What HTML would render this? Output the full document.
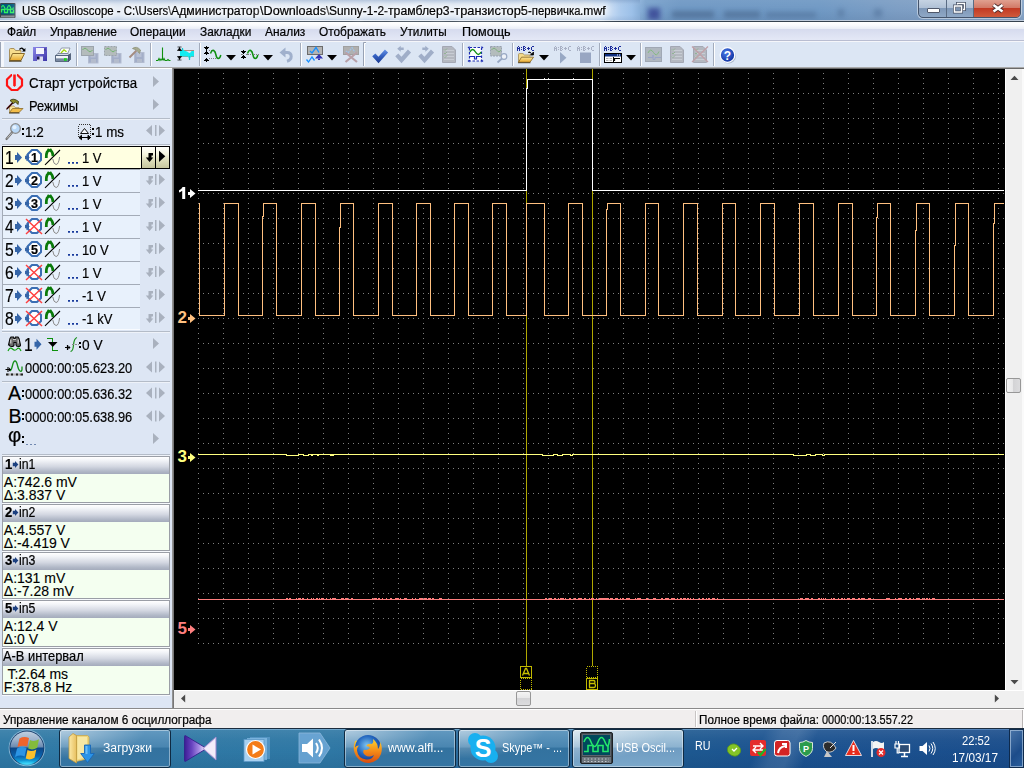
<!DOCTYPE html>
<html><head><meta charset="utf-8"><title>USB Oscilloscope</title>
<style>
html,body{margin:0;padding:0;width:1024px;height:768px;overflow:hidden;background:#dde6f4;font-family:"Liberation Sans",sans-serif;}
.a{position:absolute}
.t{position:absolute;white-space:pre;transform-origin:0 0;margin:0;padding:0}
svg{position:absolute;overflow:visible}
</style></head><body>

<div class="a" style="left:0;top:0;width:1024px;height:20px;background:linear-gradient(to right,#bccde2 0,#cfdbeb 20px,#d6e1ef 120px,#d6e2f0 585px,#b4d0f0 615px,#9cc0e8 632px,#7aa2cc 646px,#6f98c4 680px,#7099c4 820px,#7d9ec4 900px,#88a6c8 1024px)"></div>
<div class="a" style="left:0;top:0;width:640px;height:20px;background:linear-gradient(rgba(120,150,190,.45) 0,rgba(160,185,215,.15) 20%,rgba(255,255,255,0) 35%,rgba(255,255,255,0) 75%,rgba(130,160,200,.30) 100%)"></div>
<div class="a" style="left:640px;top:0;width:384px;height:20px;background:linear-gradient(rgba(255,255,255,.06) 0,rgba(255,255,255,0) 50%,rgba(20,40,80,.08) 100%)"></div>
<div class="a" style="left:648px;top:8px;width:12px;height:12px;background:#3c4c98;filter:blur(2.5px);opacity:.9"></div>
<div class="a" style="left:672px;top:11px;width:42px;height:7px;background:#4e6e94;filter:blur(2.5px);opacity:.75"></div>
<div class="a" style="left:724px;top:11px;width:36px;height:7px;background:#4e6e94;filter:blur(2.5px);opacity:.7"></div>
<div class="a" style="left:766px;top:12px;width:50px;height:6px;background:#52729a;filter:blur(2.5px);opacity:.6"></div>
<div class="a" style="left:838px;top:9px;width:6px;height:8px;background:#52729a;filter:blur(2.5px);opacity:.6"></div>
<div class="a" style="left:874px;top:9px;width:8px;height:8px;background:#52729a;filter:blur(2.5px);opacity:.6"></div>
<div class="a" style="left:0;top:20px;width:1024px;height:1px;background:linear-gradient(to right,#e6edf5 0,#e6edf5 600px,#c0ccdc 660px,#c0ccdc 100%)"></div>
<div class="a" style="left:0;top:21px;width:1024px;height:1px;background:#36424f"></div>
<svg class="a" style="left:0;top:3px" width="18" height="16"><rect x="0" y="0" width="15.500" height="15" rx="1" fill="#3a4248"/><rect x="1" y="1" width="13.500" height="10.500" fill="#00587c"/><path d="M1.500 9.500V6.500H4.500V9.500H7.500V6.500H10.500V9.500H13.500V6.500" stroke="#30f060" fill="none" stroke-width="1.300"/><path d="M1.500 4.500q1.500-4 3 0t3 0t3 0t3 0" stroke="#30f060" fill="none" stroke-width="1.200"/><rect x="1" y="12.500" width="13.500" height="2" fill="#8a9096"/></svg>
<div class="a" style="left:14px;top:2px;width:600px;height:16px;border-radius:8px;background:rgba(255,255,255,.35);filter:blur(5px)"></div>
<div class="t" style="left:21.50px;top:2.84px;font-size:12px;line-height:16px;color:#000;transform:scale(0.9540,1.0000);text-shadow:0 0 5px #fff,0 0 7px #fff,0 0 9px #fff,0 0 12px #fff;-webkit-text-stroke:0.2px;">USB Oscilloscope - C:\Users\</div>
<div class="t" style="left:171.00px;top:2.84px;font-size:12px;line-height:16px;color:#000;transform:scale(1.0222,1.0000);text-shadow:0 0 5px #fff,0 0 7px #fff,0 0 9px #fff,0 0 12px #fff;-webkit-text-stroke:0.2px;">Администратор</div>
<div class="t" style="left:259.50px;top:2.84px;font-size:12px;line-height:16px;color:#000;transform:scale(1.0523,1.0000);text-shadow:0 0 5px #fff,0 0 7px #fff,0 0 9px #fff,0 0 12px #fff;-webkit-text-stroke:0.2px;">\Downloads\</div>
<div class="t" style="left:329.00px;top:2.84px;font-size:12px;line-height:16px;color:#000;transform:scale(0.9937,1.0000);text-shadow:0 0 5px #fff,0 0 7px #fff,0 0 9px #fff,0 0 12px #fff;-webkit-text-stroke:0.2px;">Sunny-1-2-</div>
<div class="t" style="left:388.00px;top:2.84px;font-size:12px;line-height:16px;color:#000;transform:scale(1.0194,1.0000);text-shadow:0 0 5px #fff,0 0 7px #fff,0 0 9px #fff,0 0 12px #fff;-webkit-text-stroke:0.2px;">трамблер3</div>
<div class="t" style="left:449.50px;top:2.84px;font-size:12px;line-height:16px;color:#000;transform:scale(1.0676,1.0000);text-shadow:0 0 5px #fff,0 0 7px #fff,0 0 9px #fff,0 0 12px #fff;-webkit-text-stroke:0.2px;">-транзистор5</div>
<div class="t" style="left:527.50px;top:2.84px;font-size:12px;line-height:16px;color:#000;transform:scale(0.9483,1.0000);text-shadow:0 0 5px #fff,0 0 7px #fff,0 0 9px #fff,0 0 12px #fff;-webkit-text-stroke:0.2px;">-первичка</div>
<div class="t" style="left:580.00px;top:2.84px;font-size:12px;line-height:16px;color:#000;transform:scale(1.0062,1.0000);text-shadow:0 0 5px #fff,0 0 7px #fff,0 0 9px #fff,0 0 12px #fff;-webkit-text-stroke:0.2px;">.mwf</div>
<div class="a" style="left:918px;top:-1px;width:103px;height:19px;border:1px solid #44546c;border-radius:0 0 5px 5px;box-sizing:border-box;background:linear-gradient(#c6d3e3 0,#b0c1d6 45%,#7f98b8 50%,#8fa8c6 100%);box-shadow:0 0 0 1px rgba(255,255,255,.45)"></div>
<div class="a" style="left:973px;top:0;width:47px;height:17px;border-radius:0 0 4px 0;background:linear-gradient(#e0a090 0,#d27a68 45%,#c23a24 50%,#cf5a3c 100%)"></div>
<div class="a" style="left:946px;top:0;width:1px;height:17px;background:#5a6c84"></div>
<div class="a" style="left:973px;top:0;width:1px;height:17px;background:#5a6c84"></div>
<div class="a" style="left:927px;top:8px;width:11px;height:3px;background:#fff;border:1px solid #50586a;border-radius:1px;box-sizing:content-box"></div>
<svg class="a" style="left:953px;top:2px" width="14" height="13"><path d="M4.500 3.500V1.500H11.500V7.500H9.500" fill="none" stroke="#4a5468" stroke-width="3"/><path d="M4.500 3.500V1.500H11.500V7.500H9.500" fill="none" stroke="#fff" stroke-width="1.300"/><rect x="1.500" y="4" width="7" height="6" fill="none" stroke="#4a5468" stroke-width="3"/><rect x="1.500" y="4" width="7" height="6" fill="none" stroke="#fff" stroke-width="1.500"/><rect x="3.500" y="6" width="3" height="2" fill="#7c92b0"/></svg>
<svg class="a" style="left:992px;top:3px" width="12" height="11"><path d="M1.500 2L10.500 8.500M10.500 2L1.500 8.500" stroke="#4c2c2c" stroke-width="4.400" stroke-linecap="butt"/><path d="M1.500 2L10.500 8.500M10.500 2L1.500 8.500" stroke="#fff" stroke-width="2.600" stroke-linecap="butt"/></svg>
<div class="a" style="left:0;top:22px;width:1024px;height:18px;background:linear-gradient(#ffffff 0,#fafbfd 3px,#e9edf6 7px,#d6dbee 7px,#e4e8f6 18px)"></div>
<div class="a" style="left:0;top:40px;width:1024px;height:1px;background:#b9bdd1"></div>
<div class="t" style="left:6.80px;top:23.84px;font-size:12px;line-height:16px;color:#000;transform:scale(0.9893,1.0000);-webkit-text-stroke:0.2px;">Файл</div>
<div class="t" style="left:49.50px;top:23.84px;font-size:12px;line-height:16px;color:#000;transform:scale(1.0042,1.0000);-webkit-text-stroke:0.2px;">Управление</div>
<div class="t" style="left:130.30px;top:23.84px;font-size:12px;line-height:16px;color:#000;transform:scale(0.9904,1.0000);-webkit-text-stroke:0.2px;">Операции</div>
<div class="t" style="left:200.10px;top:23.84px;font-size:12px;line-height:16px;color:#000;transform:scale(0.9877,1.0000);-webkit-text-stroke:0.2px;">Закладки</div>
<div class="t" style="left:264.70px;top:23.84px;font-size:12px;line-height:16px;color:#000;transform:scale(0.9947,1.0000);-webkit-text-stroke:0.2px;">Анализ</div>
<div class="t" style="left:319.30px;top:23.84px;font-size:12px;line-height:16px;color:#000;transform:scale(0.9885,1.0000);-webkit-text-stroke:0.2px;">Отображать</div>
<div class="t" style="left:399.80px;top:23.84px;font-size:12px;line-height:16px;color:#000;transform:scale(0.9799,1.0000);-webkit-text-stroke:0.2px;">Утилиты</div>
<div class="t" style="left:461.50px;top:23.84px;font-size:12px;line-height:16px;color:#000;transform:scale(1.0505,1.0000);-webkit-text-stroke:0.2px;">Помощь</div>
<div class="a" style="left:0;top:41px;width:1024px;height:27px;background:#dce6f4"></div>
<div class="a" style="left:0;top:41px;width:1024px;height:1px;background:#f5f6fa"></div>
<div class="a" style="left:0;top:67px;width:1024px;height:1px;background:#a9a9a9"></div>
<div class="a" style="left:0;top:42px;width:1px;height:25px;background:#9aa4b6"></div><div class="a" style="left:1px;top:42px;width:3px;height:25px;background:#f4f7fc"></div>
<svg class="a" style="left:0;top:0" width="1024" height="70"><defs><linearGradient id="gf" x1="0" y1="0" x2="0" y2="1"><stop offset="0" stop-color="#fbe79a"/><stop offset="1" stop-color="#e9a82c"/></linearGradient><linearGradient id="gfl" x1="0" y1="0" x2="1" y2="1"><stop offset="0" stop-color="#8c88e8"/><stop offset="1" stop-color="#3c34a8"/></linearGradient><linearGradient id="gck" x1="0" y1="0" x2="0" y2="1"><stop offset="0" stop-color="#5a8ae0"/><stop offset="1" stop-color="#1c44a0"/></linearGradient><radialGradient id="ghp" cx=".4" cy=".35" r=".7"><stop offset="0" stop-color="#4a7ae8"/><stop offset="1" stop-color="#0c2c9c"/></radialGradient></defs><path d="M76.5 43V66" stroke="#a3acbc" stroke-width="1"/><path d="M77.5 43V66" stroke="#fff" stroke-width="1"/><path d="M150.5 43V66" stroke="#a3acbc" stroke-width="1"/><path d="M151.5 43V66" stroke="#fff" stroke-width="1"/><path d="M199.5 43V66" stroke="#a3acbc" stroke-width="1"/><path d="M200.5 43V66" stroke="#fff" stroke-width="1"/><path d="M300.5 43V66" stroke="#a3acbc" stroke-width="1"/><path d="M301.5 43V66" stroke="#fff" stroke-width="1"/><path d="M462.5 43V66" stroke="#a3acbc" stroke-width="1"/><path d="M463.5 43V66" stroke="#fff" stroke-width="1"/><path d="M512.5 43V66" stroke="#a3acbc" stroke-width="1"/><path d="M513.5 43V66" stroke="#fff" stroke-width="1"/><path d="M599.5 43V66" stroke="#a3acbc" stroke-width="1"/><path d="M600.5 43V66" stroke="#fff" stroke-width="1"/><path d="M640.5 43V66" stroke="#a3acbc" stroke-width="1"/><path d="M641.5 43V66" stroke="#fff" stroke-width="1"/><path d="M713.5 43V66" stroke="#a3acbc" stroke-width="1"/><path d="M714.5 43V66" stroke="#fff" stroke-width="1"/><path d="M366 42.5H363.5V66" stroke="#98a2b4" fill="none"/><path d="M366 43.5H364.5V66" stroke="#fff" fill="none"/><path d="M226 55h10l-5 5.5z" fill="#000"/><path d="M263 55h10l-5 5.5z" fill="#000"/><path d="M327 55h10l-5 5.5z" fill="#000"/><path d="M539 55h10l-5 5.5z" fill="#000"/><path d="M626 55h10l-5 5.5z" fill="#000"/><g transform="translate(9,47)"><path d="M0.5 13.5V2.5q0-1 1-1h3.5l1.5 2h5.5v2" fill="#f6dc8c" stroke="#a8905c"/><path d="M0.5 13.5L3.5 6.5H15.5L12 13.5Z" fill="url(#gf)" stroke="#8a6a28"/><path d="M0 14.2H12.5" stroke="#4a3a1a" stroke-width="1"/></g><path d="M19.5 49.5q2.5-3 4.5 1" fill="none" stroke="#000" stroke-width="1.3"/><path d="M22 51.5h3.4v-3.4z" fill="#000"/><g transform="translate(33,47)"><rect x="0" y="0" width="14" height="14" fill="url(#gfl)"/><rect x="3" y="1" width="8" height="6" fill="#f4f4fc"/><rect x="11.5" y="1.5" width="1" height="2" fill="#2a2470"/><rect x="4" y="9.500" width="6" height="4.5" fill="#dcdcf0"/><rect x="4" y="9.5" width="2.500" height="3" fill="#1c1848"/></g><g transform="translate(55,47)"><path d="M3 7L6.500 1H15L12.500 7Z" fill="#fdfdfd" stroke="#7c8898" stroke-width=".8"/><path d="M6 6L9 2.800L11.500 4.800" fill="none" stroke="#9cd800" stroke-width="1.300"/><path d="M0.500 8.500L3 6.500H12.500L15 8.500Z" fill="#d4dce8" stroke="#5c6c84" stroke-width=".7"/><path d="M0.500 8.500H13.500V14.500H0.500Z" fill="#a8b8cc" stroke="#4c5c74" stroke-width=".9"/><rect x="1" y="9" width="12" height="2.500" fill="#f0f4f9"/><rect x="1" y="11.500" width="12" height="2.600" fill="#7888a0"/><rect x="9" y="11.200" width="2.800" height="2.600" fill="#18d818"/><path d="M13.500 8.500L15.500 6.500V12.500L13.500 14.500Z" fill="#50607c" stroke="#3c4c64" stroke-width=".7"/></g><g transform="translate(81,46)"><rect x="7.5" y="7.5" width="9.500" height="9.500" fill="#a3aec8" stroke="#b3bcd0"/><rect x="9.500" y="8" width="5" height="3.500" fill="#b8c0d4"/><rect x="10" y="13" width="5" height="4" fill="#b4bccc"/><rect x="0.500" y="0.500" width="12" height="9" fill="#b4bcbc" stroke="#9ca4ac"/><path d="M1.500 4q2.500-3.500 5 0t5 0" fill="none" stroke="#74b474" stroke-width="1"/></g><g transform="translate(104,46)"><rect x="7.5" y="7.5" width="9.500" height="9.500" fill="#a3aec8" stroke="#b3bcd0"/><rect x="9.500" y="8" width="5" height="3.500" fill="#b8c0d4"/><rect x="10" y="13" width="5" height="4" fill="#b4bccc"/><rect x="0.500" y="0.500" width="12" height="9" fill="#b4bcbc" stroke="#9ca4ac" stroke-dasharray="2 1"/><path d="M1.500 4q2.500-3.500 5 0t5 0" fill="none" stroke="#74b474" stroke-width="1"/></g><g transform="translate(128,46)"><rect x="6.500" y="6.500" width="9.500" height="10" fill="#a3aec8" stroke="#b3bcd0"/><rect x="8.500" y="7" width="5" height="4" fill="#b8c0d4"/><rect x="9" y="13" width="5" height="3.500" fill="#b4bccc"/><path d="M1.500 11.500L8.500 4.500" stroke="#a48c80" stroke-width="2"/><path d="M4.500 2.500q4-3 8 1.500l-1 3.500l-3-3.500z" fill="#a8ac90" stroke="#8c9078" stroke-width=".8"/></g><path d="M156 60.500h2l1-2l1 2l1-1.500l1 1.500M162.500 60V47.500M163 60.500l1-2l1 2h2l1-1l1 1h1.500" fill="none" stroke="#109010" stroke-width="1.100"/><g transform="translate(177,46)"><path d="M3 4.500H17M3 10.500H17" stroke="#b08878" stroke-width="1"/><path d="M3 5q2 0 2.500-2.500q1.500 2.500 3 2.500t3 1.500t3-1.500h2.500v5.500h-3l-1.500 3l-1.500-3h-8z" fill="#10ecf0"/><path d="M5.500 2V5M12.500 10v4" stroke="#10c8d0" stroke-width="1.200"/><path d="M0.500 1h4M2.500 1v4M0.500 4.500l2-2.500l2 2.500zM0.500 14h4M2.500 14v-4M0.500 10.500l2 2.500l2-2.500z" fill="#000" stroke="#000" stroke-width=".7"/></g><g shape-rendering="crispEdges"><rect x="206" y="46" width="1" height="1" fill="#000"/><rect x="204" y="47" width="5" height="1" fill="#000"/><rect x="205" y="48" width="3" height="1" fill="#000"/><rect x="206" y="49" width="1" height="1" fill="#000"/><rect x="206" y="50" width="1" height="1" fill="#000"/><rect x="206" y="51" width="1" height="1" fill="#000"/><rect x="205" y="52" width="3" height="1" fill="#000"/><rect x="204" y="53" width="5" height="1" fill="#000"/><rect x="206" y="54" width="1" height="1" fill="#000"/><rect x="206" y="58" width="1" height="1" fill="#000"/><rect x="205" y="59" width="3" height="1" fill="#000"/><rect x="204" y="60" width="5" height="1" fill="#000"/><rect x="206" y="61" width="1" height="1" fill="#000"/><rect x="209" y="50" width="1" height="1" fill="#808080"/><rect x="211" y="50" width="1" height="1" fill="#808080"/><rect x="209" y="58" width="1" height="1" fill="#808080"/><rect x="211" y="58" width="1" height="1" fill="#808080"/><rect x="213" y="58" width="1" height="1" fill="#808080"/><rect x="215" y="58" width="1" height="1" fill="#808080"/><rect x="243" y="50" width="1" height="1" fill="#000"/><rect x="241" y="51" width="5" height="1" fill="#000"/><rect x="242" y="52" width="3" height="1" fill="#000"/><rect x="243" y="53" width="1" height="1" fill="#000"/><rect x="243" y="55" width="1" height="1" fill="#000"/><rect x="242" y="56" width="3" height="1" fill="#000"/><rect x="241" y="57" width="5" height="1" fill="#000"/><rect x="243" y="58" width="1" height="1" fill="#000"/><rect x="241" y="54" width="1" height="1" fill="#808080"/><rect x="242" y="54" width="1" height="1" fill="#808080"/><rect x="246" y="54" width="1" height="1" fill="#808080"/><rect x="247" y="54" width="1" height="1" fill="#808080"/><rect x="248" y="54" width="1" height="1" fill="#808080"/><rect x="250" y="54" width="1" height="1" fill="#808080"/><rect x="252" y="54" width="1" height="1" fill="#808080"/><rect x="254" y="54" width="1" height="1" fill="#808080"/><rect x="256" y="54" width="1" height="1" fill="#808080"/><rect x="258" y="54" width="1" height="1" fill="#808080"/></g><path d="M210.500 53.500q1.500-4 3.200-3t2.300 4.500t2.300 3.500t2.500-3.500" fill="none" stroke="#109010" stroke-width="1.500"/><path d="M247.500 53.500q1.500-4 3.200-3t2.300 4.500t2.300 3.500t2.500-3.500" fill="none" stroke="#109010" stroke-width="1.500"/><path d="M284 52.500H287Q291.200 52.500 291.200 56.500Q291.200 60 287 61.200" fill="none" stroke="#a0b0cc" stroke-width="3"/><path d="M279.500 52.500L285.500 47.500V57.500Z" fill="#a0b0cc"/><g transform="translate(306,46)"><rect x="1.500" y="0.500" width="15" height="8" fill="#b4b4b4" stroke="#6c6c6c"/><path d="M4 5l2 2l4-5.500l3 5" fill="none" stroke="#1890ff" stroke-width="1.300"/><path d="M0.500 13.500l2 2.500l3.500-5l2.500 3.500" fill="none" stroke="#1890ff" stroke-width="1.300"/><path d="M9 12.500h8l-4-4.500z" fill="#3434b4"/><path d="M12 12.500h2v1.500h-2z" fill="#3434b4"/></g><g transform="translate(342,46)"><rect x="1.500" y="0.500" width="15" height="8" fill="#b0b0b0" stroke="#a0a0a0"/><path d="M4 5l2 2l4-5.500l3 5" fill="none" stroke="#9cc4ec" stroke-width="1.200" stroke-dasharray="2 1"/><path d="M3.500 6.500L15 16M15 6.500L3.500 16" stroke="#b8a0a8" stroke-width="2.200"/></g><defs><linearGradient id="gck2" gradientUnits="userSpaceOnUse" x1="0" y1="49" x2="0" y2="63"><stop offset="0" stop-color="#6a96e8"/><stop offset=".5" stop-color="#3460c0"/><stop offset="1" stop-color="#183890"/></linearGradient></defs><g transform="translate(372,0)"><path d="M1.800 54.800L6.500 60L14.500 51" fill="none" stroke="url(#gck2)" stroke-width="4.200" stroke-linejoin="miter"/></g><g transform="translate(395,0)"><path d="M1.800 54.800L6.500 60L14.500 51" fill="none" stroke="#a0aec8" stroke-width="4.200" stroke-linejoin="miter"/><path d="M2.200 48.700L5.700 45.700V47.500H8.700V50H5.700V51.700Z" fill="#a0aec8"/></g><g transform="translate(418,0)"><path d="M1.800 54.800L6.500 60L14.500 51" fill="none" stroke="#a0aec8" stroke-width="4.200" stroke-linejoin="miter"/><path d="M10.800 48.700L7.300 45.700V47.500H4.300V50H7.300V51.700Z" fill="#a0aec8"/></g><g transform="translate(442,46)"><path d="M0.500 0.500H10L13.500 4V16.500H0.500Z" fill="#b4b8c0" stroke="#a4a8b4"/><path d="M2 4.500H12M2 7.500H12M2 10.500H12M2 13.500H12" stroke="#c8ccd4" stroke-width="1"/><path d="M2 3.500l1 1l2-2M2 7l1 1l2-2M2 10.500l1 1l2-2" fill="none" stroke="#8cb08c" stroke-width=".9"/></g><g transform="translate(467,46)"><rect x="2.500" y="1.500" width="12" height="13.500" fill="#fff" stroke="#1c2cb4" stroke-width="1.200" stroke-dasharray="2.500 1.500"/><path d="M0.500 1.500l2-1.500v3zM16.500 1.500l-2-1.500v3zM0.500 15l2-1.500v3zM16.500 15l-2-1.500v3z" fill="#1c2cb4"/><path d="M3 6q2.500-5 5.500 0t5.500 0" fill="none" stroke="#109010" stroke-width="1.400"/><path d="M3 10.500H7.500V13H9.500V10.500H14" fill="none" stroke="#1c2cb4" stroke-width="1.200"/></g><g transform="translate(490,46)"><rect x="0.500" y="0.500" width="11" height="9.500" fill="#b4bcbc" stroke="#98a0b0" stroke-dasharray="2 1"/><path d="M1.500 4q2.500-3.500 5 0t4.500 0" fill="none" stroke="#80b080" stroke-width="1"/><circle cx="14" cy="10.500" r="2.800" fill="#eef2f8" stroke="#98a8c4" stroke-width="1.200"/><path d="M12 12.500L7.500 16.500" stroke="#98a8c4" stroke-width="1.800"/></g><g shape-rendering="crispEdges" fill="#1c2c9c"><rect x="518" y="46" width="1" height="1"/><rect x="517" y="47" width="1" height="1"/><rect x="519" y="47" width="1" height="1"/><rect x="517" y="48" width="1" height="1"/><rect x="518" y="48" width="1" height="1"/><rect x="519" y="48" width="1" height="1"/><rect x="517" y="49" width="1" height="1"/><rect x="519" y="49" width="1" height="1"/><rect x="517" y="50" width="1" height="1"/><rect x="519" y="50" width="1" height="1"/><rect x="521" y="47" width="1" height="1"/><rect x="521" y="49" width="1" height="1"/><rect x="523" y="46" width="1" height="1"/><rect x="524" y="46" width="1" height="1"/><rect x="523" y="47" width="1" height="1"/><rect x="525" y="47" width="1" height="1"/><rect x="523" y="48" width="1" height="1"/><rect x="524" y="48" width="1" height="1"/><rect x="523" y="49" width="1" height="1"/><rect x="525" y="49" width="1" height="1"/><rect x="523" y="50" width="1" height="1"/><rect x="524" y="50" width="1" height="1"/><rect x="528" y="47" width="1" height="1"/><rect x="527" y="48" width="1" height="1"/><rect x="528" y="48" width="1" height="1"/><rect x="529" y="48" width="1" height="1"/><rect x="528" y="49" width="1" height="1"/><rect x="532" y="46" width="1" height="1"/><rect x="533" y="46" width="1" height="1"/><rect x="531" y="47" width="1" height="1"/><rect x="531" y="48" width="1" height="1"/><rect x="531" y="49" width="1" height="1"/><rect x="532" y="50" width="1" height="1"/><rect x="533" y="50" width="1" height="1"/></g><g transform="translate(518,52.500) scale(1,0.720)"><g transform="translate(0,0)"><path d="M0.5 13.5V2.5q0-1 1-1h3.5l1.5 2h5.5v2" fill="#f6dc8c" stroke="#a8905c"/><path d="M0.5 13.5L3.5 6.5H15.5L12 13.5Z" fill="url(#gf)" stroke="#8a6a28"/><path d="M0 14.2H12.5" stroke="#4a3a1a" stroke-width="1"/></g></g><path d="M528 52.500q2-1.500 3.500 1M530.500 55h3v-3z" fill="#000" stroke="#000" stroke-width=".8"/><g shape-rendering="crispEdges" fill="#a8b0c4"><rect x="555" y="46" width="1" height="1"/><rect x="554" y="47" width="1" height="1"/><rect x="556" y="47" width="1" height="1"/><rect x="554" y="48" width="1" height="1"/><rect x="555" y="48" width="1" height="1"/><rect x="556" y="48" width="1" height="1"/><rect x="554" y="49" width="1" height="1"/><rect x="556" y="49" width="1" height="1"/><rect x="554" y="50" width="1" height="1"/><rect x="556" y="50" width="1" height="1"/><rect x="558" y="47" width="1" height="1"/><rect x="558" y="49" width="1" height="1"/><rect x="560" y="46" width="1" height="1"/><rect x="561" y="46" width="1" height="1"/><rect x="560" y="47" width="1" height="1"/><rect x="562" y="47" width="1" height="1"/><rect x="560" y="48" width="1" height="1"/><rect x="561" y="48" width="1" height="1"/><rect x="560" y="49" width="1" height="1"/><rect x="562" y="49" width="1" height="1"/><rect x="560" y="50" width="1" height="1"/><rect x="561" y="50" width="1" height="1"/><rect x="565" y="47" width="1" height="1"/><rect x="564" y="48" width="1" height="1"/><rect x="565" y="48" width="1" height="1"/><rect x="566" y="48" width="1" height="1"/><rect x="565" y="49" width="1" height="1"/><rect x="569" y="46" width="1" height="1"/><rect x="570" y="46" width="1" height="1"/><rect x="568" y="47" width="1" height="1"/><rect x="568" y="48" width="1" height="1"/><rect x="568" y="49" width="1" height="1"/><rect x="569" y="50" width="1" height="1"/><rect x="570" y="50" width="1" height="1"/></g><path d="M560 52V63.500L566.500 57.700Z" fill="#98a8c4"/><g shape-rendering="crispEdges" fill="#a8b0c4"><rect x="578" y="46" width="1" height="1"/><rect x="577" y="47" width="1" height="1"/><rect x="579" y="47" width="1" height="1"/><rect x="577" y="48" width="1" height="1"/><rect x="578" y="48" width="1" height="1"/><rect x="579" y="48" width="1" height="1"/><rect x="577" y="49" width="1" height="1"/><rect x="579" y="49" width="1" height="1"/><rect x="577" y="50" width="1" height="1"/><rect x="579" y="50" width="1" height="1"/><rect x="581" y="47" width="1" height="1"/><rect x="581" y="49" width="1" height="1"/><rect x="583" y="46" width="1" height="1"/><rect x="584" y="46" width="1" height="1"/><rect x="583" y="47" width="1" height="1"/><rect x="585" y="47" width="1" height="1"/><rect x="583" y="48" width="1" height="1"/><rect x="584" y="48" width="1" height="1"/><rect x="583" y="49" width="1" height="1"/><rect x="585" y="49" width="1" height="1"/><rect x="583" y="50" width="1" height="1"/><rect x="584" y="50" width="1" height="1"/><rect x="588" y="47" width="1" height="1"/><rect x="587" y="48" width="1" height="1"/><rect x="588" y="48" width="1" height="1"/><rect x="589" y="48" width="1" height="1"/><rect x="588" y="49" width="1" height="1"/><rect x="592" y="46" width="1" height="1"/><rect x="593" y="46" width="1" height="1"/><rect x="591" y="47" width="1" height="1"/><rect x="591" y="48" width="1" height="1"/><rect x="591" y="49" width="1" height="1"/><rect x="592" y="50" width="1" height="1"/><rect x="593" y="50" width="1" height="1"/></g><rect x="580" y="52.500" width="11" height="10.500" fill="#98a6c2"/><g shape-rendering="crispEdges" fill="#1c2c9c"><rect x="605" y="46" width="1" height="1"/><rect x="604" y="47" width="1" height="1"/><rect x="606" y="47" width="1" height="1"/><rect x="604" y="48" width="1" height="1"/><rect x="605" y="48" width="1" height="1"/><rect x="606" y="48" width="1" height="1"/><rect x="604" y="49" width="1" height="1"/><rect x="606" y="49" width="1" height="1"/><rect x="604" y="50" width="1" height="1"/><rect x="606" y="50" width="1" height="1"/><rect x="608" y="47" width="1" height="1"/><rect x="608" y="49" width="1" height="1"/><rect x="610" y="46" width="1" height="1"/><rect x="611" y="46" width="1" height="1"/><rect x="610" y="47" width="1" height="1"/><rect x="612" y="47" width="1" height="1"/><rect x="610" y="48" width="1" height="1"/><rect x="611" y="48" width="1" height="1"/><rect x="610" y="49" width="1" height="1"/><rect x="612" y="49" width="1" height="1"/><rect x="610" y="50" width="1" height="1"/><rect x="611" y="50" width="1" height="1"/><rect x="615" y="47" width="1" height="1"/><rect x="614" y="48" width="1" height="1"/><rect x="615" y="48" width="1" height="1"/><rect x="616" y="48" width="1" height="1"/><rect x="615" y="49" width="1" height="1"/><rect x="619" y="46" width="1" height="1"/><rect x="620" y="46" width="1" height="1"/><rect x="618" y="47" width="1" height="1"/><rect x="618" y="48" width="1" height="1"/><rect x="618" y="49" width="1" height="1"/><rect x="619" y="50" width="1" height="1"/><rect x="620" y="50" width="1" height="1"/></g><g transform="translate(604,53)"><rect x="0.500" y="0.500" width="17" height="9" fill="#fff" stroke="#000"/><rect x="1" y="1" width="16" height="2.500" fill="#103080"/><rect x="13" y="1.500" width="1" height="1" fill="#fff"/><rect x="15" y="1.500" width="1" height="1" fill="#fff"/><path d="M2 5.500H8M2 7.500H8" stroke="#b0b0b0" stroke-width="1.200" stroke-dasharray="2.500 1"/><path d="M9.500 4V9.500" stroke="#000"/><path d="M10.500 8V5.500H16" fill="none" stroke="#000" stroke-width="1.200"/></g><g transform="translate(645,47)"><rect x="0.500" y="0.500" width="16" height="14" fill="#b0b8c0" stroke="#a0a8b4"/><path d="M3 6q2.500-5.500 5.500-0.500t5.500-1" fill="none" stroke="#84b884" stroke-width="1"/><path d="M3 10.500H8V8V12.500H10V10.500H16" fill="none" stroke="#98a4c8" stroke-width="1"/></g><g transform="translate(670,46)"><path d="M0.500 0.500H10L13.500 4V16.500H0.500Z" fill="#b4b8c0" stroke="#a4a8b4"/><path d="M2 4.500H12M2 7.500H12M2 10.500H12M2 13.500H12" stroke="#c8ccd4" stroke-width="1"/><path d="M2 3.500l1 1l2-2M2 7l1 1l2-2M2 10.500l1 1l2-2" fill="none" stroke="#8cb08c" stroke-width=".9"/></g><g transform="translate(693,46)"><path d="M0.500 0.500H10L13.500 4V16.500H0.500Z" fill="#b4b8c0" stroke="#a4a8b4"/><path d="M2 4.500H12M2 7.500H12M2 10.500H12M2 13.500H12" stroke="#c8ccd4" stroke-width="1"/><path d="M2 3.500l1 1l2-2M2 7l1 1l2-2M2 10.500l1 1l2-2" fill="none" stroke="#8cb08c" stroke-width=".9"/><path d="M-1 0.500L15 16M15 0.500L-1 16" stroke="#c0a0a8" stroke-width="1.300"/></g><circle cx="728.300" cy="56" r="7.600" fill="#8090a8" opacity=".55"/><circle cx="727.500" cy="55" r="7.300" fill="url(#ghp)" stroke="#fff" stroke-width="1.300"/><text x="727.500" y="59.500" text-anchor="middle" font-family="Liberation Sans" font-weight="700" font-size="12" fill="#fff">?</text></svg>
<div class="a" style="left:0;top:68px;width:172px;height:640px;background:#dde6f4"></div>
<div class="a" style="left:0;top:68px;width:172px;height:1px;background:#fff"></div>
<div class="a" style="left:2px;top:118px;width:168px;height:1px;background:#b4bcc8"></div><div class="a" style="left:2px;top:119px;width:168px;height:1px;background:#eef2f9"></div>
<div class="a" style="left:2px;top:144px;width:168px;height:1px;background:#b4bcc8"></div><div class="a" style="left:2px;top:145px;width:168px;height:1px;background:#eef2f9"></div>
<div class="a" style="left:2px;top:331px;width:168px;height:1px;background:#b4bcc8"></div><div class="a" style="left:2px;top:332px;width:168px;height:1px;background:#eef2f9"></div>
<div class="a" style="left:2px;top:381px;width:168px;height:1px;background:#b4bcc8"></div><div class="a" style="left:2px;top:382px;width:168px;height:1px;background:#eef2f9"></div>
<div class="a" style="left:2px;top:454px;width:168px;height:1px;background:#b4bcc8"></div><div class="a" style="left:2px;top:455px;width:168px;height:1px;background:#eef2f9"></div>
<div class="a" style="left:2px;top:146px;width:168px;height:23px;box-sizing:border-box;border:1px solid #000;background:#ffffe1"></div>
<div class="a" style="left:141px;top:147px;width:28px;height:21px;background:linear-gradient(#fffffa 0,#f6f6de 35%,#dcdcb8 65%,#c6c69e 100%)"></div>
<div class="a" style="left:141px;top:147px;width:1px;height:21px;background:#000"></div><div class="a" style="left:155px;top:147px;width:1px;height:21px;background:#000"></div>
<svg class="a" style="left:141px;top:146px" width="29" height="23"><path d="M7.500 7H12V9.500H10.500V11.500H12.300L8.600 16L4.800 11.500H7.500Z" fill="#000"/><path d="M18 4.700V16L24.300 10.350Z" fill="#000"/></svg>
<div class="a" style="left:2px;top:169px;width:138px;height:23px;box-sizing:border-box;border-top:1px solid #a4acb8;border-left:1px solid #a4acb8;background:#e8f1fc"></div>
<div class="a" style="left:2px;top:192px;width:138px;height:23px;box-sizing:border-box;border-top:1px solid #a4acb8;border-left:1px solid #a4acb8;background:#e8f1fc"></div>
<div class="a" style="left:2px;top:215px;width:138px;height:23px;box-sizing:border-box;border-top:1px solid #a4acb8;border-left:1px solid #a4acb8;background:#e8f1fc"></div>
<div class="a" style="left:2px;top:238px;width:138px;height:23px;box-sizing:border-box;border-top:1px solid #a4acb8;border-left:1px solid #a4acb8;background:#e8f1fc"></div>
<div class="a" style="left:2px;top:261px;width:138px;height:23px;box-sizing:border-box;border-top:1px solid #a4acb8;border-left:1px solid #a4acb8;background:#e8f1fc"></div>
<div class="a" style="left:2px;top:284px;width:138px;height:23px;box-sizing:border-box;border-top:1px solid #a4acb8;border-left:1px solid #a4acb8;background:#e8f1fc"></div>
<div class="a" style="left:2px;top:307px;width:138px;height:23px;box-sizing:border-box;border-top:1px solid #a4acb8;border-left:1px solid #a4acb8;background:#e8f1fc"></div>
<div class="a" style="left:2px;top:329px;width:138px;height:1px;background:#f8fbff"></div>
<svg class="a" style="left:0;top:0" width="174" height="768"><path d="M153 76.0V87.0L159 81.5Z" fill="#a9b1be"/><path d="M153 99.0V110.0L159 104.5Z" fill="#a9b1be"/><path d="M152 125.0V136.0L146 130.5Z" fill="#a9b1be"/><rect x="155" y="125.0" width="1.500" height="11" fill="#a9b1be"/><path d="M159 125.0V136.0L165 130.5Z" fill="#a9b1be"/><path d="M153 338.0V349.0L159 343.5Z" fill="#a9b1be"/><path d="M152 361.5V372.5L146 367.0Z" fill="#a9b1be"/><rect x="155" y="361.5" width="1.500" height="11" fill="#a9b1be"/><path d="M159 361.5V372.5L165 367.0Z" fill="#a9b1be"/><path d="M152 387.5V398.5L146 393.0Z" fill="#a9b1be"/><rect x="155" y="387.5" width="1.500" height="11" fill="#a9b1be"/><path d="M159 387.5V398.5L165 393.0Z" fill="#a9b1be"/><path d="M152 410.5V421.5L146 416.0Z" fill="#a9b1be"/><rect x="155" y="410.5" width="1.500" height="11" fill="#a9b1be"/><path d="M159 410.5V421.5L165 416.0Z" fill="#a9b1be"/><path d="M153 433.0V444.0L159 438.5Z" fill="#a9b1be"/><path d="M12 75L11.500 75L7 79.500V85.500L11.500 90H17.500L22 85.500V79.500L17.500 75L17 75" fill="none" stroke="#ff1414" stroke-width="2.200"/><path d="M13.200 74.500H15.800V85.500L14.500 87L13.200 85.500Z" fill="#ff1414"/><g transform="translate(6,98)"><path d="M3.500 14.500V9l1.500-1h3l1 1.500h4v1" fill="#f8e49c" stroke="#b09860" stroke-width=".8"/><path d="M3.500 14.500L6.500 10.500H17L13 14.500Z" fill="#f2bc48" stroke="#8a6a28" stroke-width=".8"/><path d="M3 15H13.500" stroke="#4a3a1a"/><path d="M0.800 11L7 4.500" stroke="#601010" stroke-width="1.800"/><path d="M0.500 11.500L6.500 5" stroke="#000" stroke-width=".8"/><path d="M4 2.500q3.500-3 8.500 1l-.5 3l-2.500-2.500l-2 1.500z" fill="#8c8c28" stroke="#2c2c0c" stroke-width=".8"/></g><circle cx="15.500" cy="128.500" r="4.800" fill="#b8d8f8" stroke="#8c8c8c" stroke-width="1.300"/><circle cx="14.500" cy="127.200" r="2" fill="#e4f2ff"/><path d="M12 132.500L6.500 139" stroke="#6c6c6c" stroke-width="2.200" stroke-linecap="round"/><path d="M12 132.500L7 138.500" stroke="#d8d8d8" stroke-width=".8"/><rect x="78.500" y="124.500" width="12" height="13" fill="none" stroke="#333" stroke-dasharray="1 1" shape-rendering="crispEdges"/><path d="M80.500 133.500L84.500 128.500L88.500 133.500Z" fill="#f4f7fc" stroke="#111" stroke-width="1"/><path d="M80 137.500H89M79 137.500l2.500-2.200v4.400zM90.500 137.500l-2.500-2.200v4.400z" stroke="#000" fill="#000" stroke-width="1"/><path d="M0.0 -2.5h2v-3l5 5.500l-5 5.500v-3h-2z" fill="#3565a8" transform="translate(15.00,157.50) scale(1.00) translate(0.00,0.00)"/><path d="M32 150.0H37L41 154.0V160.0L37 164.0H32L28 160.0V154.0Z" fill="#fff" stroke="#3a6eb4" stroke-width="2"/><path d="M0.0 -2.5h2v-3l5 5.500l-5 5.500v-3h-2z" fill="#3565a8" transform="translate(25.00,157.50) scale(0.66) translate(0.00,0.00)"/><path d="M45 164.8L60 150.0" stroke="#000" stroke-width="1.100"/><path d="M46.300 158.0C46 152.5 47.500 150.4 49.500 150.4C52 150.4 52.700 153.0 53 156.0" fill="none" stroke="#0a7a0a" stroke-width="2.800"/><circle cx="48.300" cy="149.7" r="1.100" fill="#0a7a0a"/><circle cx="50.700" cy="149.7" r="1.100" fill="#0a7a0a"/><path d="M52.800 159.0q.8 5.500 3.300 5.500t3.500-7.500" fill="none" stroke="#8c8c8c" stroke-width="1"/><path d="M68 162.9h2M72 162.9h2M76 162.9h2" stroke="#173a9c" stroke-width="1.800"/><path d="M0.0 -2.5h2v-3l5 5.500l-5 5.500v-3h-2z" fill="#3565a8" transform="translate(15.00,180.50) scale(1.00) translate(0.00,0.00)"/><path d="M32 173.0H37L41 177.0V183.0L37 187.0H32L28 183.0V177.0Z" fill="#fff" stroke="#3a6eb4" stroke-width="2"/><path d="M0.0 -2.5h2v-3l5 5.500l-5 5.500v-3h-2z" fill="#3565a8" transform="translate(25.00,180.50) scale(0.66) translate(0.00,0.00)"/><path d="M45 187.8L60 173.0" stroke="#000" stroke-width="1.100"/><path d="M46.300 181.0C46 175.5 47.500 173.4 49.500 173.4C52 173.4 52.700 176.0 53 179.0" fill="none" stroke="#0a7a0a" stroke-width="2.800"/><circle cx="48.300" cy="172.7" r="1.100" fill="#0a7a0a"/><circle cx="50.700" cy="172.7" r="1.100" fill="#0a7a0a"/><path d="M52.800 182.0q.8 5.500 3.300 5.500t3.500-7.500" fill="none" stroke="#8c8c8c" stroke-width="1"/><path d="M68 185.9h2M72 185.9h2M76 185.9h2" stroke="#173a9c" stroke-width="1.800"/><path d="M148.500 176.0H153V178.5H151.500V180.5H153.300L149.600 185.0L145.800 180.5H148.500Z" fill="#a9b1be"/><rect x="155" y="174.0" width="1.500" height="11" fill="#a9b1be"/><path d="M159 174.0V185.0L165 179.5Z" fill="#a9b1be"/><path d="M0.0 -2.5h2v-3l5 5.500l-5 5.500v-3h-2z" fill="#3565a8" transform="translate(15.00,203.50) scale(1.00) translate(0.00,0.00)"/><path d="M32 196.0H37L41 200.0V206.0L37 210.0H32L28 206.0V200.0Z" fill="#fff" stroke="#3a6eb4" stroke-width="2"/><path d="M0.0 -2.5h2v-3l5 5.500l-5 5.500v-3h-2z" fill="#3565a8" transform="translate(25.00,203.50) scale(0.66) translate(0.00,0.00)"/><path d="M45 210.8L60 196.0" stroke="#000" stroke-width="1.100"/><path d="M46.300 204.0C46 198.5 47.500 196.4 49.500 196.4C52 196.4 52.700 199.0 53 202.0" fill="none" stroke="#0a7a0a" stroke-width="2.800"/><circle cx="48.300" cy="195.7" r="1.100" fill="#0a7a0a"/><circle cx="50.700" cy="195.7" r="1.100" fill="#0a7a0a"/><path d="M52.800 205.0q.8 5.500 3.300 5.500t3.500-7.500" fill="none" stroke="#8c8c8c" stroke-width="1"/><path d="M68 208.9h2M72 208.9h2M76 208.9h2" stroke="#173a9c" stroke-width="1.800"/><path d="M148.500 199.0H153V201.5H151.500V203.5H153.300L149.600 208.0L145.800 203.5H148.500Z" fill="#a9b1be"/><rect x="155" y="197.0" width="1.500" height="11" fill="#a9b1be"/><path d="M159 197.0V208.0L165 202.5Z" fill="#a9b1be"/><path d="M0.0 -2.5h2v-3l5 5.500l-5 5.500v-3h-2z" fill="#3565a8" transform="translate(15.00,226.50) scale(1.00) translate(0.00,0.00)"/><path d="M32 219.0H37L41 223.0V229.0L37 233.0H32L28 229.0V223.0Z" fill="#fff" stroke="#3a6eb4" stroke-width="2"/><path d="M0.0 -2.5h2v-3l5 5.500l-5 5.500v-3h-2z" fill="#3565a8" transform="translate(25.00,226.50) scale(0.66) translate(0.00,0.00)"/><path d="M26 219.0L42 234.0M42 219.0L26 234.0" stroke="#ff4040" stroke-width="1.500"/><path d="M45 233.8L60 219.0" stroke="#000" stroke-width="1.100"/><path d="M46.300 227.0C46 221.5 47.500 219.4 49.500 219.4C52 219.4 52.700 222.0 53 225.0" fill="none" stroke="#0a7a0a" stroke-width="2.800"/><circle cx="48.300" cy="218.7" r="1.100" fill="#0a7a0a"/><circle cx="50.700" cy="218.7" r="1.100" fill="#0a7a0a"/><path d="M52.800 228.0q.8 5.500 3.300 5.500t3.500-7.500" fill="none" stroke="#8c8c8c" stroke-width="1"/><path d="M68 231.9h2M72 231.9h2M76 231.9h2" stroke="#173a9c" stroke-width="1.800"/><path d="M148.500 222.0H153V224.5H151.500V226.5H153.300L149.600 231.0L145.800 226.5H148.500Z" fill="#a9b1be"/><rect x="155" y="220.0" width="1.500" height="11" fill="#a9b1be"/><path d="M159 220.0V231.0L165 225.5Z" fill="#a9b1be"/><path d="M0.0 -2.5h2v-3l5 5.500l-5 5.500v-3h-2z" fill="#3565a8" transform="translate(15.00,249.50) scale(1.00) translate(0.00,0.00)"/><path d="M32 242.0H37L41 246.0V252.0L37 256.0H32L28 252.0V246.0Z" fill="#fff" stroke="#3a6eb4" stroke-width="2"/><path d="M0.0 -2.5h2v-3l5 5.500l-5 5.500v-3h-2z" fill="#3565a8" transform="translate(25.00,249.50) scale(0.66) translate(0.00,0.00)"/><path d="M45 256.8L60 242.0" stroke="#000" stroke-width="1.100"/><path d="M46.300 250.0C46 244.5 47.500 242.4 49.500 242.4C52 242.4 52.700 245.0 53 248.0" fill="none" stroke="#0a7a0a" stroke-width="2.800"/><circle cx="48.300" cy="241.7" r="1.100" fill="#0a7a0a"/><circle cx="50.700" cy="241.7" r="1.100" fill="#0a7a0a"/><path d="M52.800 251.0q.8 5.500 3.300 5.500t3.500-7.500" fill="none" stroke="#8c8c8c" stroke-width="1"/><path d="M68 254.9h2M72 254.9h2M76 254.9h2" stroke="#173a9c" stroke-width="1.800"/><path d="M148.500 245.0H153V247.5H151.500V249.5H153.300L149.600 254.0L145.800 249.5H148.500Z" fill="#a9b1be"/><rect x="155" y="243.0" width="1.500" height="11" fill="#a9b1be"/><path d="M159 243.0V254.0L165 248.5Z" fill="#a9b1be"/><path d="M0.0 -2.5h2v-3l5 5.500l-5 5.500v-3h-2z" fill="#3565a8" transform="translate(15.00,272.50) scale(1.00) translate(0.00,0.00)"/><path d="M32 265.0H37L41 269.0V275.0L37 279.0H32L28 275.0V269.0Z" fill="#fff" stroke="#3a6eb4" stroke-width="2"/><path d="M0.0 -2.5h2v-3l5 5.500l-5 5.500v-3h-2z" fill="#3565a8" transform="translate(25.00,272.50) scale(0.66) translate(0.00,0.00)"/><path d="M26 265.0L42 280.0M42 265.0L26 280.0" stroke="#ff4040" stroke-width="1.500"/><path d="M45 279.8L60 265.0" stroke="#000" stroke-width="1.100"/><path d="M46.300 273.0C46 267.5 47.500 265.4 49.500 265.4C52 265.4 52.700 268.0 53 271.0" fill="none" stroke="#0a7a0a" stroke-width="2.800"/><circle cx="48.300" cy="264.7" r="1.100" fill="#0a7a0a"/><circle cx="50.700" cy="264.7" r="1.100" fill="#0a7a0a"/><path d="M52.800 274.0q.8 5.500 3.300 5.500t3.500-7.500" fill="none" stroke="#8c8c8c" stroke-width="1"/><path d="M68 277.9h2M72 277.9h2M76 277.9h2" stroke="#173a9c" stroke-width="1.800"/><path d="M148.500 268.0H153V270.5H151.500V272.5H153.300L149.600 277.0L145.800 272.5H148.500Z" fill="#a9b1be"/><rect x="155" y="266.0" width="1.500" height="11" fill="#a9b1be"/><path d="M159 266.0V277.0L165 271.5Z" fill="#a9b1be"/><path d="M0.0 -2.5h2v-3l5 5.500l-5 5.500v-3h-2z" fill="#3565a8" transform="translate(15.00,295.50) scale(1.00) translate(0.00,0.00)"/><path d="M32 288.0H37L41 292.0V298.0L37 302.0H32L28 298.0V292.0Z" fill="#fff" stroke="#3a6eb4" stroke-width="2"/><path d="M0.0 -2.5h2v-3l5 5.500l-5 5.500v-3h-2z" fill="#3565a8" transform="translate(25.00,295.50) scale(0.66) translate(0.00,0.00)"/><path d="M26 288.0L42 303.0M42 288.0L26 303.0" stroke="#ff4040" stroke-width="1.500"/><path d="M45 302.8L60 288.0" stroke="#000" stroke-width="1.100"/><path d="M46.300 296.0C46 290.5 47.500 288.4 49.500 288.4C52 288.4 52.700 291.0 53 294.0" fill="none" stroke="#0a7a0a" stroke-width="2.800"/><circle cx="48.300" cy="287.7" r="1.100" fill="#0a7a0a"/><circle cx="50.700" cy="287.7" r="1.100" fill="#0a7a0a"/><path d="M52.800 297.0q.8 5.500 3.300 5.500t3.500-7.500" fill="none" stroke="#8c8c8c" stroke-width="1"/><path d="M68 300.9h2M72 300.9h2M76 300.9h2" stroke="#173a9c" stroke-width="1.800"/><path d="M148.500 291.0H153V293.5H151.500V295.5H153.300L149.600 300.0L145.800 295.5H148.500Z" fill="#a9b1be"/><rect x="155" y="289.0" width="1.500" height="11" fill="#a9b1be"/><path d="M159 289.0V300.0L165 294.5Z" fill="#a9b1be"/><path d="M0.0 -2.5h2v-3l5 5.500l-5 5.500v-3h-2z" fill="#3565a8" transform="translate(15.00,318.50) scale(1.00) translate(0.00,0.00)"/><path d="M32 311.0H37L41 315.0V321.0L37 325.0H32L28 321.0V315.0Z" fill="#fff" stroke="#3a6eb4" stroke-width="2"/><path d="M0.0 -2.5h2v-3l5 5.500l-5 5.500v-3h-2z" fill="#3565a8" transform="translate(25.00,318.50) scale(0.66) translate(0.00,0.00)"/><path d="M26 311.0L42 326.0M42 311.0L26 326.0" stroke="#ff4040" stroke-width="1.500"/><path d="M45 325.8L60 311.0" stroke="#000" stroke-width="1.100"/><path d="M46.300 319.0C46 313.5 47.500 311.4 49.500 311.4C52 311.4 52.700 314.0 53 317.0" fill="none" stroke="#0a7a0a" stroke-width="2.800"/><circle cx="48.300" cy="310.7" r="1.100" fill="#0a7a0a"/><circle cx="50.700" cy="310.7" r="1.100" fill="#0a7a0a"/><path d="M52.800 320.0q.8 5.500 3.300 5.500t3.500-7.500" fill="none" stroke="#8c8c8c" stroke-width="1"/><path d="M68 323.9h2M72 323.9h2M76 323.9h2" stroke="#173a9c" stroke-width="1.800"/><path d="M148.500 314.0H153V316.5H151.500V318.5H153.300L149.600 323.0L145.800 318.5H148.500Z" fill="#a9b1be"/><rect x="155" y="312.0" width="1.500" height="11" fill="#a9b1be"/><path d="M159 312.0V323.0L165 317.5Z" fill="#a9b1be"/></svg>
<div class="t" style="left:28.70px;top:72.70px;font-size:15.3px;line-height:20px;color:#000;transform:scale(0.8674,1.0000);-webkit-text-stroke:0.2px;">Старт устройства</div>
<div class="t" style="left:28.80px;top:95.70px;font-size:15.3px;line-height:20px;color:#000;transform:scale(0.8426,1.0000);-webkit-text-stroke:0.2px;">Режимы</div>
<div class="a" style="left:22px;top:128px;width:2px;height:2px;background:#000"></div><div class="a" style="left:22px;top:133px;width:2px;height:2px;background:#000"></div>
<div class="t" style="left:24.60px;top:121.70px;font-size:15.3px;line-height:20px;color:#000;transform:scale(0.8794,1.0000);-webkit-text-stroke:0.2px;">1:2</div>
<div class="a" style="left:92px;top:128px;width:2px;height:2px;background:#000"></div><div class="a" style="left:92px;top:133px;width:2px;height:2px;background:#000"></div>
<div class="t" style="left:94.60px;top:121.70px;font-size:15.3px;line-height:20px;color:#000;transform:scale(0.8746,1.0000);-webkit-text-stroke:0.2px;">1 ms</div>
<div class="t" style="left:5.40px;top:145.69px;font-size:18.2px;line-height:24px;color:#000;transform:scale(0.8593,1.0000);-webkit-text-stroke:0.45px;-webkit-text-stroke:0.2px;">1</div>
<div class="t" style="left:81.70px;top:147.70px;font-size:15.3px;line-height:20px;color:#000;transform:scale(0.8500,1.0000);-webkit-text-stroke:0.2px;">1 V</div>
<div class="t" style="left:31.00px;top:150.34px;font-size:12px;line-height:16px;color:#000;font-weight:700;transform:scale(1.0467,1.0000);-webkit-text-stroke:0.2px;">1</div>
<div class="t" style="left:5.40px;top:168.69px;font-size:18.2px;line-height:24px;color:#000;transform:scale(0.8593,1.0000);-webkit-text-stroke:0.45px;-webkit-text-stroke:0.2px;">2</div>
<div class="t" style="left:81.70px;top:170.70px;font-size:15.3px;line-height:20px;color:#000;transform:scale(0.8500,1.0000);-webkit-text-stroke:0.2px;">1 V</div>
<div class="t" style="left:31.00px;top:173.34px;font-size:12px;line-height:16px;color:#000;font-weight:700;transform:scale(1.0467,1.0000);-webkit-text-stroke:0.2px;">2</div>
<div class="t" style="left:5.40px;top:191.69px;font-size:18.2px;line-height:24px;color:#000;transform:scale(0.8593,1.0000);-webkit-text-stroke:0.45px;-webkit-text-stroke:0.2px;">3</div>
<div class="t" style="left:81.70px;top:193.70px;font-size:15.3px;line-height:20px;color:#000;transform:scale(0.8500,1.0000);-webkit-text-stroke:0.2px;">1 V</div>
<div class="t" style="left:31.00px;top:196.34px;font-size:12px;line-height:16px;color:#000;font-weight:700;transform:scale(1.0467,1.0000);-webkit-text-stroke:0.2px;">3</div>
<div class="t" style="left:5.40px;top:214.69px;font-size:18.2px;line-height:24px;color:#000;transform:scale(0.8593,1.0000);-webkit-text-stroke:0.45px;-webkit-text-stroke:0.2px;">4</div>
<div class="t" style="left:81.70px;top:216.70px;font-size:15.3px;line-height:20px;color:#000;transform:scale(0.8500,1.0000);-webkit-text-stroke:0.2px;">1 V</div>
<div class="t" style="left:5.40px;top:237.69px;font-size:18.2px;line-height:24px;color:#000;transform:scale(0.8593,1.0000);-webkit-text-stroke:0.45px;-webkit-text-stroke:0.2px;">5</div>
<div class="t" style="left:81.70px;top:239.70px;font-size:15.3px;line-height:20px;color:#000;transform:scale(0.8500,1.0000);-webkit-text-stroke:0.2px;">10 V</div>
<div class="t" style="left:31.00px;top:242.34px;font-size:12px;line-height:16px;color:#000;font-weight:700;transform:scale(1.0467,1.0000);-webkit-text-stroke:0.2px;">5</div>
<div class="t" style="left:5.40px;top:260.69px;font-size:18.2px;line-height:24px;color:#000;transform:scale(0.8593,1.0000);-webkit-text-stroke:0.45px;-webkit-text-stroke:0.2px;">6</div>
<div class="t" style="left:81.70px;top:262.70px;font-size:15.3px;line-height:20px;color:#000;transform:scale(0.8500,1.0000);-webkit-text-stroke:0.2px;">1 V</div>
<div class="t" style="left:5.40px;top:283.69px;font-size:18.2px;line-height:24px;color:#000;transform:scale(0.8593,1.0000);-webkit-text-stroke:0.45px;-webkit-text-stroke:0.2px;">7</div>
<div class="t" style="left:81.70px;top:285.70px;font-size:15.3px;line-height:20px;color:#000;transform:scale(0.8500,1.0000);-webkit-text-stroke:0.2px;">-1 V</div>
<div class="t" style="left:5.40px;top:306.69px;font-size:18.2px;line-height:24px;color:#000;transform:scale(0.8593,1.0000);-webkit-text-stroke:0.45px;-webkit-text-stroke:0.2px;">8</div>
<div class="t" style="left:81.70px;top:308.70px;font-size:15.3px;line-height:20px;color:#000;transform:scale(0.8500,1.0000);-webkit-text-stroke:0.2px;">-1 kV</div>
<div class="t" style="left:24.20px;top:332.69px;font-size:18.2px;line-height:24px;color:#000;transform:scale(0.8593,1.0000);-webkit-text-stroke:0.45px;-webkit-text-stroke:0.2px;">1</div>
<div class="a" style="left:79px;top:342px;width:2px;height:2px;background:#000"></div><div class="a" style="left:79px;top:346px;width:2px;height:2px;background:#000"></div>
<div class="t" style="left:81.90px;top:334.70px;font-size:15.3px;line-height:20px;color:#000;transform:scale(0.8969,1.0000);-webkit-text-stroke:0.2px;">0 V</div>
<div class="t" style="left:24.80px;top:357.70px;font-size:15.3px;line-height:20px;color:#000;transform:scale(0.8401,1.0000);-webkit-text-stroke:0.2px;">0000:00:05.623.20</div>
<div class="t" style="left:8.00px;top:380.74px;font-size:19.5px;line-height:25px;color:#000;-webkit-text-stroke:0.2px;">A</div>
<div class="a" style="left:22px;top:390px;width:2px;height:2px;background:#000"></div><div class="a" style="left:22px;top:395px;width:2px;height:2px;background:#000"></div>
<div class="t" style="left:24.80px;top:383.70px;font-size:15.3px;line-height:20px;color:#000;transform:scale(0.8401,1.0000);-webkit-text-stroke:0.2px;">0000:00:05.636.32</div>
<div class="t" style="left:8.50px;top:403.74px;font-size:19.5px;line-height:25px;color:#000;-webkit-text-stroke:0.2px;">B</div>
<div class="a" style="left:22px;top:413px;width:2px;height:2px;background:#000"></div><div class="a" style="left:22px;top:418px;width:2px;height:2px;background:#000"></div>
<div class="t" style="left:24.80px;top:406.70px;font-size:15.3px;line-height:20px;color:#000;transform:scale(0.8401,1.0000);-webkit-text-stroke:0.2px;">0000:00:05.638.96</div>
<div class="t" style="left:8.30px;top:422.07px;font-size:20px;line-height:26px;color:#000;transform:scale(1.0255,1.0000);-webkit-text-stroke:0.2px;">φ</div>
<div class="a" style="left:22px;top:436px;width:2px;height:2px;background:#000"></div><div class="a" style="left:22px;top:441px;width:2px;height:2px;background:#000"></div>
<div class="a" style="left:26px;top:444px;width:2px;height:1px;background:#7088b0"></div><div class="a" style="left:30px;top:444px;width:2px;height:1px;background:#7088b0"></div><div class="a" style="left:34px;top:444px;width:2px;height:1px;background:#7088b0"></div>
<svg class="a" style="left:0;top:330px" width="174" height="130"><path d="M8.500 15L10 8.500l1-1.500h2.500l.5 1.500h1l.5-1.500h2.500l1 1.500L20.500 15q0 1.500-2.200 1.500t-2.300-1.500v-2.500h-2v2.500q0 1.500-2.300 1.500t-2.200-1.500z" fill="#6c6c6c" stroke="#080808" stroke-width="1.100"/><path d="M10.800 9.500v4M18.200 9.500v4" stroke="#e0e0e0" stroke-width="1.100"/><path d="M13 9.500h3" stroke="#c8c8c8" stroke-width="1"/><path d="M8 21q2-4.500 4.500-2t4.500 0t4 2" fill="none" stroke="#10a010" stroke-width="1.200"/><path d="M0 -2.500h2v-3l5 5.500l-5 5.500v-3h-2z" fill="#3565a8" transform="translate(34.500,14.200)"/><path d="M47 8.500H52.500V20.500H58" fill="none" stroke="#0c900c" stroke-width="1.100" shape-rendering="crispEdges"/><path d="M48 12H57.500L52.750 17Z" fill="#000"/><path d="M70.500 21.500q2.500 0 3-6.500t3.500-7.500" fill="none" stroke="#18901c" stroke-width="1.200"/><path d="M72 14.500H79" stroke="#888" stroke-dasharray="2 1"/><path d="M65 17.500h5M67.500 15v5" stroke="#000" fill="none" stroke-width="1.200"/><path d="M68.500 15.500l2 2l-2 2z" fill="#000"/><path d="M10 41q1.500-1 2.500-5.500t2.500-4.500t2.500 4.500t2.500 5.500t2-1.500v-3" fill="none" stroke="#18901c" stroke-width="1.300"/><path d="M6.500 44.500H22.500" stroke="#b4b4b4" stroke-width="2.200"/><path d="M6 44.500h2.500M11 44.500h2M16 44.500h2M20.500 44.500h2.500" stroke="#222" stroke-width="2.200"/><path d="M5.500 39.500h5M8 37v5" stroke="#000" stroke-width="1.100"/><path d="M9 37.500l2 2l-2 2z" fill="#000"/></svg>
<div class="a" style="left:2px;top:456px;width:168px;height:47px;box-sizing:border-box;border:1px solid #9a9ea6;background:#f4fff0"></div>
<div class="a" style="left:2px;top:503px;width:168px;height:1px;background:#f6f9fd"></div>
<div class="a" style="left:3px;top:457px;width:166px;height:17px;background:linear-gradient(#ffffff 0,#f2f4f8 20%,#d4d8e2 55%,#b0b7c6 85%,#a4abbc 100%)"></div>
<div class="t" style="left:5.30px;top:455.15px;font-size:14px;line-height:18px;color:#000;font-weight:700;transform:scale(0.9363,1.0000);-webkit-text-stroke:0.2px;">1</div>
<svg class="a" style="left:12px;top:461px" width="8" height="9"><path d="M0.800 1.800h2.200v-1.800l3.400 3.500l-3.400 3.500v-1.800h-2.200z" fill="#1c4080"/></svg>
<div class="t" style="left:18.80px;top:455.15px;font-size:14px;line-height:18px;color:#000;transform:scale(0.8776,1.0000);-webkit-text-stroke:0.2px;">in1</div>
<div class="t" style="left:3.80px;top:473.15px;font-size:14px;line-height:18px;color:#000;-webkit-text-stroke:0.12px;">A:742.6 mV</div>
<div class="t" style="left:3.80px;top:486.15px;font-size:14px;line-height:18px;color:#000;-webkit-text-stroke:0.12px;">Δ:3.837 V</div>
<div class="a" style="left:2px;top:504px;width:168px;height:47px;box-sizing:border-box;border:1px solid #9a9ea6;background:#f4fff0"></div>
<div class="a" style="left:2px;top:551px;width:168px;height:1px;background:#f6f9fd"></div>
<div class="a" style="left:3px;top:505px;width:166px;height:17px;background:linear-gradient(#ffffff 0,#f2f4f8 20%,#d4d8e2 55%,#b0b7c6 85%,#a4abbc 100%)"></div>
<div class="t" style="left:5.30px;top:503.15px;font-size:14px;line-height:18px;color:#000;font-weight:700;transform:scale(0.9363,1.0000);-webkit-text-stroke:0.2px;">2</div>
<svg class="a" style="left:12px;top:509px" width="8" height="9"><path d="M0.800 1.800h2.200v-1.800l3.400 3.500l-3.400 3.500v-1.800h-2.200z" fill="#1c4080"/></svg>
<div class="t" style="left:18.80px;top:503.15px;font-size:14px;line-height:18px;color:#000;transform:scale(0.8776,1.0000);-webkit-text-stroke:0.2px;">in2</div>
<div class="t" style="left:3.80px;top:521.15px;font-size:14px;line-height:18px;color:#000;-webkit-text-stroke:0.12px;">A:4.557 V</div>
<div class="t" style="left:3.80px;top:534.15px;font-size:14px;line-height:18px;color:#000;-webkit-text-stroke:0.12px;">Δ:-4.419 V</div>
<div class="a" style="left:2px;top:552px;width:168px;height:47px;box-sizing:border-box;border:1px solid #9a9ea6;background:#f4fff0"></div>
<div class="a" style="left:2px;top:599px;width:168px;height:1px;background:#f6f9fd"></div>
<div class="a" style="left:3px;top:553px;width:166px;height:17px;background:linear-gradient(#ffffff 0,#f2f4f8 20%,#d4d8e2 55%,#b0b7c6 85%,#a4abbc 100%)"></div>
<div class="t" style="left:5.30px;top:551.15px;font-size:14px;line-height:18px;color:#000;font-weight:700;transform:scale(0.9363,1.0000);-webkit-text-stroke:0.2px;">3</div>
<svg class="a" style="left:12px;top:557px" width="8" height="9"><path d="M0.800 1.800h2.200v-1.800l3.400 3.500l-3.400 3.500v-1.800h-2.200z" fill="#1c4080"/></svg>
<div class="t" style="left:18.80px;top:551.15px;font-size:14px;line-height:18px;color:#000;transform:scale(0.8776,1.0000);-webkit-text-stroke:0.2px;">in3</div>
<div class="t" style="left:3.80px;top:569.15px;font-size:14px;line-height:18px;color:#000;-webkit-text-stroke:0.12px;">A:131 mV</div>
<div class="t" style="left:3.80px;top:582.15px;font-size:14px;line-height:18px;color:#000;-webkit-text-stroke:0.12px;">Δ:-7.28 mV</div>
<div class="a" style="left:2px;top:600px;width:168px;height:47px;box-sizing:border-box;border:1px solid #9a9ea6;background:#f4fff0"></div>
<div class="a" style="left:2px;top:647px;width:168px;height:1px;background:#f6f9fd"></div>
<div class="a" style="left:3px;top:601px;width:166px;height:17px;background:linear-gradient(#ffffff 0,#f2f4f8 20%,#d4d8e2 55%,#b0b7c6 85%,#a4abbc 100%)"></div>
<div class="t" style="left:5.30px;top:599.15px;font-size:14px;line-height:18px;color:#000;font-weight:700;transform:scale(0.9363,1.0000);-webkit-text-stroke:0.2px;">5</div>
<svg class="a" style="left:12px;top:605px" width="8" height="9"><path d="M0.800 1.800h2.200v-1.800l3.400 3.500l-3.400 3.500v-1.800h-2.200z" fill="#1c4080"/></svg>
<div class="t" style="left:18.80px;top:599.15px;font-size:14px;line-height:18px;color:#000;transform:scale(0.8776,1.0000);-webkit-text-stroke:0.2px;">in5</div>
<div class="t" style="left:3.80px;top:617.15px;font-size:14px;line-height:18px;color:#000;-webkit-text-stroke:0.12px;">A:12.4 V</div>
<div class="t" style="left:3.80px;top:630.15px;font-size:14px;line-height:18px;color:#000;-webkit-text-stroke:0.12px;">Δ:0 V</div>
<div class="a" style="left:2px;top:648px;width:168px;height:47px;box-sizing:border-box;border:1px solid #9a9ea6;background:#f4fff0"></div>
<div class="a" style="left:2px;top:695px;width:168px;height:1px;background:#f6f9fd"></div>
<div class="a" style="left:3px;top:649px;width:166px;height:17px;background:linear-gradient(#ffffff 0,#f2f4f8 20%,#d4d8e2 55%,#b0b7c6 85%,#a4abbc 100%)"></div>
<div class="t" style="left:3.30px;top:647.15px;font-size:14px;line-height:18px;color:#000;transform:scale(0.9187,1.0000);-webkit-text-stroke:0.2px;">A-B интервал</div>
<div class="t" style="left:3.80px;top:665.15px;font-size:14px;line-height:18px;color:#000;-webkit-text-stroke:0.12px;"> T:2.64 ms</div>
<div class="t" style="left:3.80px;top:678.15px;font-size:14px;line-height:18px;color:#000;-webkit-text-stroke:0.12px;">F:378.8 Hz</div>
<div class="a" style="left:172px;top:68px;width:2px;height:641px;background:linear-gradient(to right,#a0a0a0,#696969)"></div>
<div class="a" style="left:174px;top:68px;width:850px;height:1px;background:#696969"></div>
<div class="a" style="left:174px;top:69px;width:831px;height:621px;background:#000"></div>
<svg class="a" style="left:0;top:0" width="1024" height="768" shape-rendering="crispEdges"><path d="M198.5 73V644M223.5 73V644M248.5 73V644M273.5 73V644M298.5 73V644M323.5 73V644M348.5 73V644M373.5 73V644M398.5 73V644M423.5 73V644M448.5 73V644M473.5 73V644M498.5 73V644M523.5 73V644M548.5 73V644M573.5 73V644M598.5 73V644M623.5 73V644M648.5 73V644M673.5 73V644M698.5 73V644M723.5 73V644M748.5 73V644M773.5 73V644M798.5 73V644M823.5 73V644M848.5 73V644M873.5 73V644M898.5 73V644M923.5 73V644M948.5 73V644M973.5 73V644M998.5 73V644" stroke="#808080" stroke-width="1" stroke-dasharray="1 4" fill="none"/><path d="M198 93.5H1004M198 118.5H1004M198 143.5H1004M198 168.5H1004M198 193.5H1004M198 218.5H1004M198 243.5H1004M198 268.5H1004M198 293.5H1004M198 318.5H1004M198 343.5H1004M198 368.5H1004M198 393.5H1004M198 418.5H1004M198 443.5H1004M198 468.5H1004M198 493.5H1004M198 518.5H1004M198 543.5H1004M198 568.5H1004M198 593.5H1004M198 618.5H1004M198 643.5H1004" stroke="#808080" stroke-width="1" stroke-dasharray="1 4" fill="none"/><path d="M526.5 69V666M592.5 69V666" stroke="#b0a800" stroke-width="1" fill="none"/><path d="M198 599.5H1004" stroke="#ff8080" stroke-width="1" fill="none"/><path d="M286 598.5h2M289 598.5h2M296 598.5h1M298 598.5h3M302 598.5h2M307 598.5h1M311 598.5h1M313 598.5h1M316 598.5h2M319 598.5h1M321 598.5h3M326 598.5h1M330 598.5h1M332 598.5h4M341 598.5h3M345 598.5h3M351 598.5h2M372 598.5h1M374 598.5h3M378 598.5h2M382 598.5h1M386 598.5h1M390 598.5h2M395 598.5h4M400 598.5h1M404 598.5h3M412 598.5h1M415 598.5h1M419 598.5h4M424 598.5h3M428 598.5h3M432 598.5h2M439 598.5h3M545 598.5h2M549 598.5h3M554 598.5h2M558 598.5h1M560 598.5h4M565 598.5h1M569 598.5h2M574 598.5h2M578 598.5h4M584 598.5h2M589 598.5h1M591 598.5h3M596 598.5h1M599 598.5h1M602 598.5h2M605 598.5h4M610 598.5h3M600 598.5h2M604 598.5h4M610 598.5h3M615 598.5h3M620 598.5h1M622 598.5h2M626 598.5h4M635 598.5h1M637 598.5h4M646 598.5h2M653 598.5h3M661 598.5h2M665 598.5h4M671 598.5h4M677 598.5h1M680 598.5h2M683 598.5h3M687 598.5h2M690 598.5h1M693 598.5h1M699 598.5h1M702 598.5h2M706 598.5h1M708 598.5h2M712 598.5h3M717 598.5h1M800 598.5h3M805 598.5h4M811 598.5h2M818 598.5h2M821 598.5h1M823 598.5h1M825 598.5h1M831 598.5h1M833 598.5h2M838 598.5h1M841 598.5h2M844 598.5h1M847 598.5h3M852 598.5h3M858 598.5h2M861 598.5h4M868 598.5h3M886 598.5h4M895 598.5h1M898 598.5h4M905 598.5h2M909 598.5h2M913 598.5h1M916 598.5h4M922 598.5h1M924 598.5h1M926 598.5h2M929 598.5h1M932 598.5h3" stroke="#ff8080" stroke-width="1" fill="none"/><path d="M198 454.5H286V455.5H298V454.5H303V455.5H308V454.5H311V455.5H312V454.5H317V455.5H318V454.5H330V455.5H331V454.5H332V455.5H333V454.5H542V455.5H553V454.5H557V455.5H562V454.5H570V455.5H572V454.5H793V455.5H806V454.5H810V455.5H815V454.5H822V455.5H824V454.5H1004" stroke="#ffff80" stroke-width="1" fill="none"/><path d="M198.5 203.5H199.5V315.5H224.5V203.5H238.5V315.5H262.5V216.5H263.5V203.5H276.5V315.5H301.5V203.5H315.5V315.5H339.5V227.5H340.5V203.5H353.5V315.5H378.5V203.5H392.5V315.5H416.5V203.5H430.5V315.5H454.5V203.5H468.5V315.5H492.5V203.5H506.5V315.5H526.5V203.5H544.5V315.5H568.5V203.5H582.5V315.5H606.5V209.5H607.5V203.5H620.5V315.5H645.5V203.5H658.5V315.5H683.5V203.5H697.5V315.5H722.5V203.5H735.5V315.5H760.5V203.5H774.5V315.5H799.5V203.5H813.5V315.5H838.5V203.5H852.5V315.5H876.5V217.5H877.5V203.5H890.5V315.5H915.5V230.5H916.5V203.5H929.5V315.5H954.5V245.5H955.5V203.5H968.5V315.5H993.5V223.5H994.5V203.5H1004" stroke="#ffc080" stroke-width="1" fill="none"/><path d="M198 190.5H526.5V88.5H527.5V79.5H592.5V190.5H1004" stroke="#fff" stroke-width="1" fill="none"/><path d="M544 78.5h1M548 78.5h1M573 78.5h1" stroke="#e0e0e0" stroke-width="1" fill="none"/><path d="M188 192.0h2v-3l5.5 4.5l-5.5 4.5v-3h-2z" fill="#fff" shape-rendering="auto"/><path d="M188 317.0h2v-3l5.5 4.5l-5.5 4.5v-3h-2z" fill="#ffc080" shape-rendering="auto"/><path d="M188 456.0h2v-3l5.5 4.5l-5.5 4.5v-3h-2z" fill="#ffff80" shape-rendering="auto"/><path d="M188 628.0h2v-3l5.5 4.5l-5.5 4.5v-3h-2z" fill="#ff8080" shape-rendering="auto"/></svg>
<svg class="a" style="left:0;top:0" width="200" height="210"><path d="M182.600 187H185.200V199H182.200V190.800Q181 192 179 192.600V190.200Q181.600 189.200 182.600 187Z" fill="#fff"/></svg>
<div class="t" style="left:177.50px;top:307.11px;font-size:17px;line-height:22px;color:#ffc080;font-weight:700;">2</div>
<div class="t" style="left:177.50px;top:446.11px;font-size:17px;line-height:22px;color:#ffff80;font-weight:700;">3</div>
<div class="t" style="left:177.50px;top:618.11px;font-size:17px;line-height:22px;color:#ff8080;font-weight:700;">5</div>
<svg class="a" style="left:0;top:0" width="1024" height="768" shape-rendering="crispEdges"><g fill="none" stroke="#c0b800" stroke-width="1"><rect x="520.500" y="666.500" width="11" height="11"/><rect x="520.500" y="678.500" width="11" height="11" stroke-dasharray="1 1"/><rect x="586.500" y="666.500" width="11" height="11" stroke-dasharray="1 1"/><rect x="586.500" y="678.500" width="11" height="11"/></g><path d="M522.500 675.500L525.500 668.500H526.500L529.500 675.500M523.500 673.500H528.500" fill="none" stroke="#c8c000" stroke-width="1.300" shape-rendering="auto"/><path d="M589 680.500H593.500q1.500 0 1.500 1.500t-1.500 1.500H589M589 683.500H594q1.500 0 1.500 2t-1.500 2H589M589.500 680.500V687.500" fill="none" stroke="#c8c000" stroke-width="1.300" shape-rendering="auto"/></svg>
<div class="a" style="left:1005px;top:69px;width:19px;height:621px;background:#f0f0f0;border-left:1px solid #fff;box-sizing:border-box"></div>
<div class="a" style="left:1006px;top:378px;width:15px;height:15px;border:1px solid #979797;border-radius:2px;box-sizing:border-box;background:linear-gradient(to right,#f4f4f4 0,#e8e8e9 45%,#d4d4d6 50%,#dcdcde 100%)"></div>
<svg class="a" style="left:1010px;top:75px" width="9" height="6"><path d="M0.500 5L4.500 0.800L8.500 5Z" fill="#4a4a4a"/></svg>
<svg class="a" style="left:1010px;top:679px" width="9" height="6"><path d="M0.500 1L4.500 5.200L8.500 1Z" fill="#4a4a4a"/></svg>
<div class="a" style="left:1022px;top:69px;width:2px;height:639px;background:#fafafa"></div>
<div class="a" style="left:174px;top:690px;width:850px;height:18px;background:#f0f0f0;border-top:1px solid #fff;box-sizing:border-box"></div>
<div class="a" style="left:516px;top:691px;width:15px;height:15px;border:1px solid #979797;border-radius:2px;box-sizing:border-box;background:linear-gradient(#f4f4f4 0,#e8e8e9 45%,#d4d4d6 50%,#dcdcde 100%)"></div>
<svg class="a" style="left:180px;top:694px" width="6" height="9"><path d="M5.200 0.500L1 4.500L5.200 8.500Z" fill="#4a4a4a"/></svg>
<svg class="a" style="left:994px;top:694px" width="6" height="9"><path d="M0.800 0.500L5 4.500L0.800 8.500Z" fill="#4a4a4a"/></svg>
<div class="a" style="left:0;top:708px;width:1024px;height:1px;background:#8a8a8a"></div>
<div class="a" style="left:0;top:709px;width:1024px;height:19px;background:#f1eeee"></div>
<div class="a" style="left:0;top:709px;width:1024px;height:1px;background:#fff"></div>
<div class="t" style="left:3.00px;top:711.84px;font-size:12px;line-height:16px;color:#000;transform:scale(0.9822,1.0000);-webkit-text-stroke:0.2px;">Управление каналом 6 осциллографа</div>
<div class="a" style="left:695px;top:711px;width:1px;height:16px;background:#c8c4c4"></div>
<div class="a" style="left:696px;top:711px;width:1px;height:16px;background:#fff"></div>
<div class="t" style="left:699.00px;top:711.84px;font-size:12px;line-height:16px;color:#000;transform:scale(0.9728,1.0000);-webkit-text-stroke:0.2px;">Полное время файла: </div>
<div class="t" style="left:822.30px;top:711.84px;font-size:12px;line-height:16px;color:#000;transform:scale(0.9090,1.0000);-webkit-text-stroke:0.2px;">0000:00:13.557.22</div>
<div class="a" style="left:1022px;top:710px;width:1px;height:18px;background:#b8b4b4"></div><div class="a" style="left:1023px;top:710px;width:1px;height:18px;background:#fff"></div>
<div class="a" style="left:0;top:728px;width:1024px;height:40px;background:linear-gradient(to right,#2f79a5 0,#2e77a4 330px,#2b6c9e 460px,#246297 600px,#1d5890 690px,#1b5290 780px,#1a4d8b 1024px)"></div>
<div class="a" style="left:0;top:728px;width:1024px;height:40px;background:linear-gradient(rgba(255,255,255,.10) 0,rgba(255,255,255,.03) 30%,rgba(0,0,0,0) 60%,rgba(0,20,50,.08) 100%)"></div>
<div class="a" style="left:0;top:728px;width:1024px;height:1px;background:#1c2c3e"></div>
<div class="a" style="left:0;top:729px;width:1024px;height:1px;background:linear-gradient(to right,#6fa6cc 0,#6fa6cc 600px,#5c8cc0 800px,#5080b8 1024px)"></div>
<div class="a" style="left:730px;top:730px;width:110px;height:38px;background:linear-gradient(115deg,rgba(255,255,255,0) 28%,rgba(255,255,255,.10) 42%,rgba(255,255,255,.12) 55%,rgba(255,255,255,0) 70%)"></div>
<div class="a" style="left:59px;top:729px;width:112px;height:39px;box-sizing:border-box;border:1px solid #0f2a42;border-radius:3px;background:radial-gradient(ellipse at 0 0,rgba(255,255,255,.50) 0,rgba(255,255,255,0) 55%),linear-gradient(#6299c0 0,#4a86b1 45%,#33729f 50%,#3575a3 100%);box-shadow:inset 0 0 0 1px rgba(255,255,255,.42)"></div>
<div class="a" style="left:344px;top:729px;width:112px;height:39px;box-sizing:border-box;border:1px solid #0f2a42;border-radius:3px;background:radial-gradient(ellipse at 0 0,rgba(255,255,255,.50) 0,rgba(255,255,255,0) 55%),linear-gradient(#6299c0 0,#4a86b1 45%,#33729f 50%,#3575a3 100%);box-shadow:inset 0 0 0 1px rgba(255,255,255,.42)"></div>
<div class="a" style="left:458px;top:729px;width:112px;height:39px;box-sizing:border-box;border:1px solid #0f2a42;border-radius:3px;background:radial-gradient(ellipse at 0 0,rgba(255,255,255,.50) 0,rgba(255,255,255,0) 55%),linear-gradient(#6299c0 0,#4a86b1 45%,#33729f 50%,#3575a3 100%);box-shadow:inset 0 0 0 1px rgba(255,255,255,.42)"></div>
<div class="a" style="left:572px;top:729px;width:112px;height:39px;box-sizing:border-box;border:1px solid #0f2a42;border-radius:3px;background:radial-gradient(ellipse at 0 0,rgba(255,255,255,.55) 0,rgba(255,255,255,0) 60%),linear-gradient(#b4cfe2 0,#8db3d0 45%,#6f9cc2 50%,#7ba8ca 100%);box-shadow:inset 0 0 0 1px rgba(255,255,255,.42)"></div>
<div class="t" style="left:103.00px;top:739.84px;font-size:12px;line-height:16px;color:#fff;transform:scale(1.0146,1.0000);">Загрузки</div>
<div class="t" style="left:388.00px;top:739.84px;font-size:12px;line-height:16px;color:#fff;transform:scale(1.0275,1.0000);">www.alfl...</div>
<div class="t" style="left:502.00px;top:739.84px;font-size:12px;line-height:16px;color:#fff;transform:scale(0.9087,1.0000);">Skype™ - ...</div>
<div class="t" style="left:616.00px;top:739.84px;font-size:12px;line-height:16px;color:#fff;transform:scale(0.9121,1.0000);">USB Oscil...</div>
<div class="t" style="left:695.00px;top:737.84px;font-size:12px;line-height:16px;color:#fff;transform:scale(0.8937,1.0000);">RU</div>
<div class="t" style="left:961.50px;top:732.84px;font-size:12px;line-height:16px;color:#fff;transform:scale(0.9324,1.0000);">22:52</div>
<div class="t" style="left:951.50px;top:749.84px;font-size:12px;line-height:16px;color:#fff;transform:scale(0.9846,1.0000);">17/03/17</div>
<div class="a" style="left:1009px;top:729px;width:15px;height:39px;box-sizing:border-box;border:1px solid #0e2a4c;background:linear-gradient(135deg,#4a74a8 0,#2c5a94 40%,#1c4c8a 60%,#2a5e9c 100%);box-shadow:inset 0 0 0 1px rgba(200,220,240,.55)"></div>
<svg class="a" style="left:0;top:728px" width="1024" height="40"><defs><radialGradient id="orb" cx=".5" cy=".35" r=".75"><stop offset="0" stop-color="#6aa8d8"/><stop offset=".45" stop-color="#2a62a4"/><stop offset=".8" stop-color="#123a78"/><stop offset="1" stop-color="#2c8cd0"/></radialGradient><radialGradient id="orbg" cx=".5" cy="1" r=".6"><stop offset="0" stop-color="#5ce0ff" stop-opacity=".9"/><stop offset="1" stop-color="#5ce0ff" stop-opacity="0"/></radialGradient><linearGradient id="fo" x1="0" y1="0" x2="1" y2="0"><stop offset="0" stop-color="#fbe9a6"/><stop offset="1" stop-color="#e8c060"/></linearGradient><linearGradient id="kmp" x1="0" y1="0" x2="1" y2="0"><stop offset="0" stop-color="#3c1c94"/><stop offset=".35" stop-color="#6844c0"/><stop offset=".7" stop-color="#a88ce4"/><stop offset="1" stop-color="#f4f0fc"/></linearGradient><radialGradient id="ffx" cx=".45" cy=".4" r=".6"><stop offset="0" stop-color="#7cc4f0"/><stop offset=".6" stop-color="#2468c0"/><stop offset="1" stop-color="#183c90"/></radialGradient><linearGradient id="ffo" x1="0" y1="0" x2="0" y2="1"><stop offset="0" stop-color="#fcd430"/><stop offset=".5" stop-color="#f48c18"/><stop offset="1" stop-color="#d84c10"/></linearGradient></defs><defs><linearGradient id="orb2" x1="0" y1="0" x2="0" y2="1"><stop offset="0" stop-color="#c0cfe0"/><stop offset=".25" stop-color="#9cb2cc"/><stop offset=".47" stop-color="#6a8ab0"/><stop offset=".5" stop-color="#0c4686"/><stop offset=".75" stop-color="#0a64b0"/><stop offset=".92" stop-color="#10a8e0"/><stop offset="1" stop-color="#18d8f8"/></linearGradient></defs><circle cx="26.900" cy="20" r="18.300" fill="#9cc4e0" opacity=".8"/><circle cx="26.900" cy="20" r="17.400" fill="#123a6a"/><circle cx="26.900" cy="20" r="16.600" fill="url(#orb2)"/><ellipse cx="26.900" cy="33" rx="11" ry="4.500" fill="url(#orbg)"/><g transform="translate(0,0)"><path d="M19.500 10.500q4.500-2.500 9.500-.5l-1.800 8.500q-4.500-1.800-9.700 .5z" fill="#f0642c"/><path d="M30 12q4 2.200 9-.8l-1.800 8.600q-4.500 2.800-9 .8z" fill="#84bc3c"/><path d="M17 20.500q4.500-2.500 9.500-.5l-1.900 8.500q-4.600-2-9.600 .5z" fill="#2c94e4"/><path d="M27.500 22q4 2.200 8.800-.6l-1.800 8.400q-4.500 2.800-8.800 .8z" fill="#fcc02c"/></g><g transform="translate(68,3)"><path d="M8 4.500H19.500L21 6V27.500L8 30.500Z" fill="#efd67e" stroke="#c8a850" stroke-width=".8"/><path d="M9.500 6H19V26L9.500 28.500Z" fill="#f8e8a4"/><path d="M1 6L5 2.500L8.500 4.500V32L1 27.500Z" fill="url(#fo)" stroke="#c09c40" stroke-width=".8"/><path d="M16.500 14h6v8.500h3.800l-6.800 9l-6.800-9h3.800z" fill="#2c94e8" stroke="#1868b8" stroke-width=".9"/><path d="M17.500 15h2v8h-2z" fill="#8cd0fc" opacity=".7"/></g><g transform="translate(184,7)"><path d="M0.500 1.500Q0.500 0 2 1L21 12.500Q22 13.500 21 14.500L2 26Q0.500 27 0.500 25.500Z" fill="url(#kmp)" stroke="#34208c" stroke-width=".9"/><path d="M32 2L19 13.500L32 25Z" fill="#e6dcf4" stroke="#a48cd0" stroke-width=".9"/><path d="M20.500 13.500L31 4.500V22.500Z" fill="#f8f4fc" opacity=".7"/></g><g transform="translate(243,8)"><rect x="7" y="1" width="20" height="22" fill="#6ca8d8" opacity=".55"/><rect x="4" y="2" width="20" height="22" fill="#8cc0e8" opacity=".7"/><rect x="1" y="3.500" width="20" height="22" fill="#a8d0f0" stroke="#5c98c8" stroke-width=".8"/><circle cx="12.500" cy="13.500" r="9" fill="#f47c18" stroke="#fff" stroke-width="1.200"/><path d="M9.500 8.500V18.500L18 13.500Z" fill="#fff"/></g><g transform="translate(298,4)"><path d="M1 1H22L32 16L22 31H1Z" fill="#78b0e0" opacity=".75" stroke="#a8ccec" stroke-width=".8"/><path d="M4 12H9L15 6.500V25.500L9 20H4Z" fill="#fff"/><path d="M18 11q3.500 5 0 10M21 7.500q6 8.500 0 17" fill="none" stroke="#fff" stroke-width="2"/></g><g transform="translate(352,4)"><circle cx="16" cy="16" r="13" fill="url(#ffx)"/><path d="M3 9q-3 8 1 15q5 7.500 13 7q9-1 12-9q2-7-1-12q0 5-2 7q0-6-5-10q1 3-1 5q-4-1-6 2q3 0 4 2q-3 3-6 1.500q-2 3 1 5.500q4 3 9 0q-2 5-8 4.500q-8-1-9-9q0-3 2-5q-3 0-4 2q0-4 2-7z" fill="url(#ffo)"/></g><g transform="translate(467,4)"><circle cx="16" cy="16" r="12.500" fill="#18b0f0"/><circle cx="8" cy="8" r="7" fill="#18b0f0"/><circle cx="24" cy="24" r="7" fill="#18b0f0"/><text x="16" y="25" text-anchor="middle" font-family="Liberation Sans" font-weight="700" font-size="25" fill="#fff">S</text></g><g transform="translate(580,4)"><rect x="0.500" y="0.500" width="32" height="31" rx="1.500" fill="#3c4248" stroke="#1c2024"/><rect x="2.500" y="2.500" width="28" height="21" fill="#00485c" stroke="#5c646c"/><path d="M4 10q3.500-9 7 0t7 0t7 0t4.500-3" fill="none" stroke="#24e86c" stroke-width="1.600"/><path d="M4 19.500H8V13.500H13V19.500H18V13.500H23V19.500H28V14" fill="none" stroke="#24e86c" stroke-width="1.600"/><rect x="2" y="25" width="29" height="6" fill="#6c747c"/><path d="M4 27H29M4 29.500H29" stroke="#c4c8cc" stroke-width="1.200" stroke-dasharray="1.500 2"/></g><g transform="translate(726,13)"><path d="M2 6q-2 5 3 8q6 3 9-2q2-5-3-8q-5-3-9 2z" fill="#84c428" stroke="#5c9c14" stroke-width=".8"/><path d="M6 8l2 2l3-3" fill="none" stroke="#fff" stroke-width="1.300"/></g><g transform="translate(750,12)"><rect x="0" y="0" width="16" height="16" rx="2" fill="#e42c2c"/><path d="M3 6h10M10 3l3 3l-3 3M13 10H3M6 7l-3 3l3 3" fill="none" stroke="#fff" stroke-width="1.400"/><path d="M8 12l2.500 3l5-6" fill="none" stroke="#24b424" stroke-width="2.400"/></g><g transform="translate(774,12)"><rect x="0.500" y="0.500" width="15.500" height="15.500" rx="2.500" fill="#d42424" stroke="#fff" stroke-width="1"/><path d="M4 13q1-6 7-7M8 4h4v4" fill="none" stroke="#fff" stroke-width="2"/></g><g transform="translate(799,12)"><path d="M7 0.500q3 2 6.500 2v6q0 5-6.500 8q-6.500-3-6.500-8v-6q3.500 0 6.500-2z" fill="#2c9c4c" stroke="#d8e8d8" stroke-width="1"/><text x="7" y="12" text-anchor="middle" font-family="Liberation Sans" font-weight="700" font-size="9" fill="#fff">P</text></g><g transform="translate(822,12)"><path d="M2 3q7-4 12 5q-3 5-9 4q-5-4-3-9z" fill="#2c2c2c" stroke="#d8d8d8" stroke-width=".9"/><path d="M5 11l-3 6h8z" fill="#c8c8c8"/><path d="M8 8l6-6" stroke="#e8e8e8" stroke-width="1"/></g><g transform="translate(845,12)"><path d="M8.500 0.500L16.500 15.500H0.500Z" fill="#e82c1c" stroke="#fff" stroke-width=".8"/><path d="M8.500 5v6M8.500 12.500v1.500" stroke="#fff" stroke-width="2"/></g><g transform="translate(870,12)"><path d="M2 1V17" stroke="#fff" stroke-width="1.600"/><path d="M3 2q3-2 6 0t5 0v7q-2 2-5 0t-6 0z" fill="#f4f4f4"/><circle cx="11" cy="12.500" r="4.500" fill="#e42c2c"/><path d="M9 10.500l4 4M13 10.500l-4 4" stroke="#fff" stroke-width="1.300"/></g><g transform="translate(894,12)"><rect x="5" y="4.500" width="10.500" height="8" fill="#2c4c74" stroke="#fff" stroke-width="1.300"/><path d="M7 16.500h7M10.500 13v3" stroke="#fff" stroke-width="1.500"/><path d="M2 1v3M4.500 1v3M1 4h4.500v4h-4.500zM3.200 8v5h2" fill="none" stroke="#fff" stroke-width="1.200"/></g><g transform="translate(919,12)"><path d="M0.500 6H3.500L8 2V15L3.500 11H0.500Z" fill="#fff"/><path d="M10 5.500q2 3 0 6M12 3.500q3.500 5 0 10M14 2q4.500 6.500 0 13" fill="none" stroke="#fff" stroke-width="1"/></g></svg>
</body></html>
